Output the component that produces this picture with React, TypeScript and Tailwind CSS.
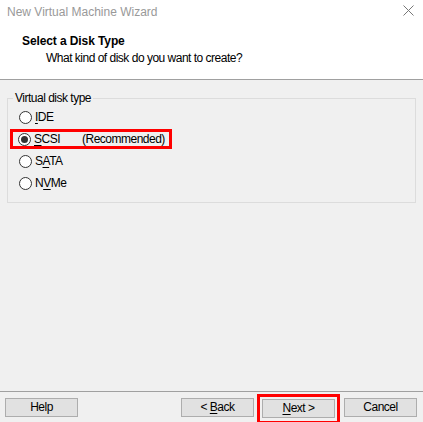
import React from "react";

const font = { fontFamily: '"Liberation Sans", Arial, sans-serif' };

function Radio({ checked }: { checked?: boolean }) {
  return (
    <span className="flex h-[13px] w-[13px] shrink-0 items-center justify-center rounded-full border border-[#333333] bg-white">
      {checked && <span className="h-[7px] w-[7px] rounded-full bg-[#333333]" />}
    </span>
  );
}

function Option({
  label,
  u,
  checked,
  extra,
  boxed,
}: {
  label: string;
  u: number;
  checked?: boolean;
  extra?: string;
  boxed?: boolean;
}) {
  return (
    <div
      className={
        boxed
          ? "-ml-[9px] flex h-[20px] w-[162px] items-center gap-[3px] border-[3px] border-[#ff0000] pl-[5px]"
          : "flex h-[20px] items-center gap-[3px]"
      }
    >
      <Radio checked={checked} />
      <span className="w-[30px] text-[12px] leading-none tracking-[-0.5px] text-black">
        {label.slice(0, u)}
        <span className="underline underline-offset-2">{label[u]}</span>
        {label.slice(u + 1)}
      </span>
      {extra && (
        <span className="ml-[15px] text-[12px] leading-none tracking-[-0.5px] text-black">{extra}</span>
      )}
    </div>
  );
}

function Btn({ children, boxed }: { children: React.ReactNode; boxed?: boolean }) {
  const b = (
    <div className="flex h-[19px] w-[73px] items-center justify-center border border-[#adadad] bg-[#e1e1e1] text-[12px] leading-none tracking-[-0.5px] text-black">
      {children}
    </div>
  );
  if (boxed)
    return (
      <div className="-mx-[5px] mt-[3px] border-[3px] border-[#ff0000] px-[2px] pb-[3px] pt-[2px]">{b}</div>
    );
  return b;
}

export default function App() {
  return (
    <div className="flex h-[422px] w-[423px] flex-col overflow-hidden bg-[#f0f0f0]" style={font}>
      <div className="flex h-[79px] flex-col bg-white">
        <div className="flex h-[24px] items-center justify-between pl-[7px] pr-[9px]">
          <span className="text-[12px] text-[#999999]">New Virtual Machine Wizard</span>
          <svg width="11" height="11" viewBox="0 0 11 11" className="mt-[-3px]">
            <path d="M0.5 0.5 L10.5 10.5 M10.5 0.5 L0.5 10.5" stroke="#777777" strokeWidth="1" />
          </svg>
        </div>
        <div className="pl-[22px] pt-[10px] text-[12px] font-bold leading-[14px] tracking-[-0.1px] text-black">
          Select a Disk Type
        </div>
        <div className="pl-[46px] pt-[3px] text-[12px] leading-[14px] tracking-[-0.5px] text-black">
          What kind of disk do you want to create?
        </div>
      </div>
      <div className="h-px bg-[#a0a0a0]" />
      <div className="px-[7px] pt-[18px]">
        <div className="relative h-[105px] border border-[#dcdcdc] pl-[11px] pt-[8px]">
          <span className="absolute left-[5px] top-[-9px] bg-[#f0f0f0] px-[2px] text-[12px] leading-[16px] tracking-[-0.5px] text-black">
            Virtual disk type
          </span>
          <div className="flex flex-col gap-[2px]">
            <Option label="IDE" u={0} />
            <Option label="SCSI" u={0} checked extra="(Recommended)" boxed />
            <Option label="SATA" u={1} />
            <Option label="NVMe" u={1} />
          </div>
        </div>
      </div>
      <div className="flex-1" />
      <div className="h-px bg-[#a0a0a0]" />
      <div className="flex h-[30px] items-center pl-[5px] pr-[6px]">
        <Btn>Help</Btn>
        <div className="flex-1" />
        <Btn>
          &lt;&nbsp;<span className="underline underline-offset-2">B</span>ack
        </Btn>
        <div className="w-[8px]" />
        <Btn boxed>
          <span className="underline underline-offset-2">N</span>ext &gt;
        </Btn>
        <div className="w-[9px]" />
        <Btn>Cancel</Btn>
      </div>
    </div>
  );
}
